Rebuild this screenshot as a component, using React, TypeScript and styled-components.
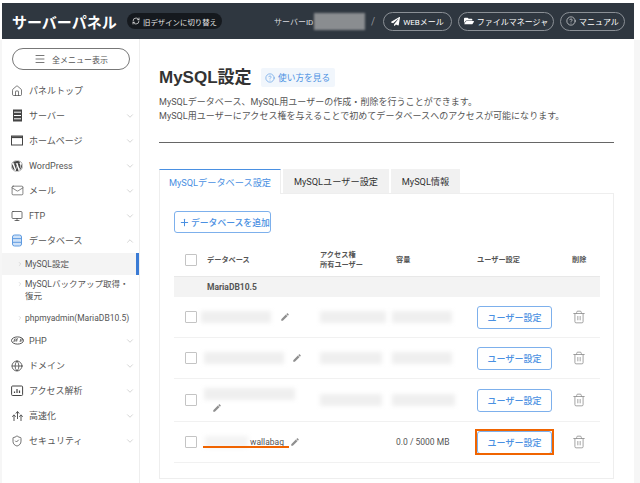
import React from 'react';
import styled, { createGlobalStyle } from 'styled-components';
import {
  ChevronDown, ChevronRight, ChevronUp, CircleHelp, Globe, House, Mail, Menu,
  Monitor, Plus, RefreshCw, ShieldCheck, Trash2,
} from 'lucide-react';
import { FaFolderOpen, FaPaperPlane, FaWordpress } from 'react-icons/fa';
import { MdEdit } from 'react-icons/md';

const GlobalStyle = createGlobalStyle`
  html, body { margin: 0; padding: 0; background: #fff; }
  body { font-family: Roboto, "Noto Sans CJK JP", sans-serif; color: #444; }
  * { box-sizing: border-box; }
`;

const Page = styled.div`
  width: 640px;
  height: 483px;
  overflow: hidden;
  padding-top: 3px;
  display: flex;
`;
const Frame = styled.div`
  width: 632px;
  height: 480px;
  display: flex;
  flex-direction: column;
  flex-shrink: 0;
`;
const Gutter = styled.div`
  width: ${p => p.$w}px;
  flex-shrink: 0;
  background: #f6f6f6;
  margin-top: 37px;
`;
const Header = styled.header`
  height: 36px;
  background: #2f3740;
  display: flex;
  align-items: center;
  padding: 0 0 0 10px;
  color: #fff;
  flex-shrink: 0;
`;
const Logo = styled.div`
  font-size: 15px;
  font-weight: 700;
  white-space: nowrap;
  width: 115px;
`;
const OldDesign = styled.div`
  height: 16px;
  width: 95px;
  border-radius: 8px;
  background: #15191e;
  display: flex;
  align-items: center;
  justify-content: center;
  gap: 3px;
  font-size: 7.4px;
  color: #e8e8e8;
  white-space: nowrap;
`;
const ServerLabel = styled.div`
  margin-left: 52px;
  width: 40px;
  font-size: 8px;
  color: #d8dade;
  white-space: nowrap;
`;
const ServerBlur = styled.div`
  width: 51px;
  height: 17px;
  background: #8a8d90;
  filter: blur(1px);
`;
const Slash = styled.div`
  width: 18px;
  padding-left: 6px;
  font-size: 10px;
  color: #8f949a;
`;
const HeadButtons = styled.div`
  display: flex;
  gap: 6px;
`;
const HeadButton = styled.div`
  width: ${p => p.$w}px;
  height: 19px;
  border: 1px solid #8b9096;
  border-radius: 10px;
  display: flex;
  align-items: center;
  justify-content: center;
  gap: 3px;
  font-size: 8px;
  color: #fff;
  white-space: nowrap;
`;

const Body = styled.div`
  flex: 1;
  display: flex;
  min-height: 0;
`;
const Sidebar = styled.aside`
  width: 138px;
  flex-shrink: 0;
  border-right: 1px solid #eeeeee;
  padding-top: 9px;
`;
const MenuAll = styled.div`
  width: 118px;
  height: 22px;
  margin-left: 10px;
  border: 1px solid #777;
  border-radius: 11px;
  display: flex;
  align-items: center;
  justify-content: center;
  gap: 6px;
  font-size: 8px;
  color: #555;
`;
const NavList = styled.nav`
  margin-top: 8px;
`;
const NavRow = styled.div`
  height: 25px;
  display: flex;
  align-items: center;
  padding: 0 4px 0 9px;
  font-size: 9px;
  color: #555;
`;
const NavIcon = styled.span`
  width: 18px;
  flex-shrink: 0;
  display: flex;
  align-items: center;
  color: #444;
`;
const NavLabel = styled.span`
  flex: 1;
`;
const SubRow = styled.div`
  display: flex;
  align-items: flex-start;
  padding: ${p => p.$pad} 6px 0 15px;
  height: ${p => p.$h}px;
  font-size: 8.5px;
  line-height: 12px;
  color: #555;
  background: ${p => (p.$current ? '#f4f4f4' : 'transparent')};
  border-right: ${p => (p.$current ? '3px solid #3a7bd5' : '0')};
`;
const SubArrow = styled.span`
  width: 8px;
  flex-shrink: 0;
  padding-top: 3px;
  color: #aaa;
  display: flex;
`;

const Main = styled.main`
  flex: 1;
  padding: 25px 0 0 19px;
  min-width: 0;
`;
const TitleRow = styled.div`
  display: flex;
  align-items: center;
  gap: 9px;
  height: 22px;
`;
const Title = styled.h1`
  margin: 0;
  font-family: "Liberation Sans", "Noto Sans CJK JP", sans-serif;
  font-size: 17px;
  font-weight: 700;
  color: #333;
`;
const HelpLink = styled.div`
  height: 19px;
  width: 74px;
  margin-top: 5px;
  background: #f1f6fc;
  border-radius: 2px;
  display: flex;
  align-items: center;
  justify-content: center;
  gap: 3px;
  font-size: 8.7px;
  color: #4a90e2;
`;
const Lead = styled.p`
  margin: 9px 0 0;
  font-size: 9px;
  letter-spacing: 0.04px;
  line-height: 14px;
  color: #555;
  white-space: nowrap;
`;
const Rule = styled.hr`
  margin: 19px 0 0;
  width: 455px;
  border: 0;
  border-top: 1px solid #666;
  height: 0;
`;
const Tabs = styled.div`
  display: flex;
  gap: 2px;
  margin-top: 26px;
`;
const Tab = styled.div`
  width: ${p => p.$w}px;
  height: ${p => (p.$active ? '25px' : '24px')};
  margin-bottom: ${p => (p.$active ? '-1px' : '0')};
  display: flex;
  align-items: center;
  justify-content: center;
  font-size: 9.2px;
  position: relative;
  z-index: ${p => (p.$active ? 1 : 0)};
  color: ${p => (p.$active ? '#4a90e2' : '#333')};
  background: ${p => (p.$active ? '#fff' : '#f1f1f1')};
  border-top: ${p => (p.$active ? '1px solid #4a90e2' : '0')};
  border-left: ${p => (p.$active ? '1px solid #eee' : '0')};
  border-right: ${p => (p.$active ? '1px solid #eee' : '0')};
  white-space: nowrap;
`;
const Card = styled.section`
  position: relative;
  width: 455px;
  height: 286px;
  border: 1px solid #eeeeee;
  padding: 17px 13px 0 14px;
`;
const AddButton = styled.div`
  width: 97px;
  height: 22px;
  border: 1px solid #7db0ec;
  border-radius: 3px;
  display: flex;
  align-items: center;
  padding-left: 4px;
  gap: 1px;
  font-size: 8.8px;
  font-weight: 500;
  color: #4a90e2;
`;
const Table = styled.div`
  margin-top: 11px;
`;
const GridRow = styled.div`
  display: grid;
  grid-template-columns: 33px 113px 76px 81px 95px 1fr;
  align-items: center;
`;
const HeadRow = styled(GridRow)`
  height: 33px;
  font-size: 7.2px;
  line-height: 10px;
  font-weight: 700;
  color: #555;
  border-bottom: 1px solid #e8e8e8;
`;
const GroupRow = styled.div`
  height: 20px;
  padding-left: 33px;
  background: #f3f3f3;
  display: flex;
  align-items: center;
  font-size: 8.5px;
  font-weight: 700;
  color: #555;
`;
const DataRow = styled(GridRow)`
  height: ${p => p.$h}px;
  border-bottom: 1px solid #f1f1f1;
`;
const Check = styled.span`
  width: 12px;
  height: 12px;
  margin-left: 11px;
  border: 1px solid #c4c4c4;
  border-radius: 1px;
  display: block;
`;
const NameCell = styled.div`
  display: flex;
  flex-direction: ${p => (p.$stack ? 'column' : 'row')};
  align-items: ${p => (p.$stack ? 'flex-start' : 'center')};
  margin-left: ${p => p.$shift}px;
  gap: ${p => (p.$stack ? '3px' : '5px')};
  font-size: 8.5px;
  color: #555;
`;
const Blurred = styled.div`
  width: ${p => p.$w}px;
  height: 12px;
  flex-shrink: 0;
  background: #efefef;
  filter: blur(2px);
`;
const NameBlur = styled(Blurred)`
  background: ${p => (p.$faint ? '#f3f3f3' : '#efefef')};
`;
const SizeBlur = styled(Blurred)`
  margin-left: -4px;
`;
const Pencil = styled(MdEdit)`
  color: #8f8f8f;
  font-size: 10px;
  margin-left: ${p => p.$ml || 0}px;
  flex-shrink: 0;
`;
const Wallabag = styled.span`
  margin-left: -3px;
`;
const Usage = styled.div`
  font-size: 8.5px;
  color: #555;
  white-space: nowrap;
`;
const UserButton = styled.div`
  width: 75px;
  height: 23px;
  border: 1px solid #7db0ec;
  border-radius: 3px;
  display: flex;
  align-items: center;
  justify-content: center;
  font-size: 9px;
  font-weight: 500;
  color: #4a90e2;
`;
const Bin = styled(Trash2)`
  color: #8f8f8f;
`;
const OrangeBox = styled.div`
  position: absolute;
  left: 315px;
  top: 235px;
  width: 79px;
  height: 26px;
  border: 2.5px solid #f06400;
`;
const OrangeLine = styled.div`
  position: absolute;
  left: 43px;
  top: 252px;
  width: 86px;
  height: 2px;
  background: #f06400;
`;

const ServerIcon = () => (
  <svg width="13" height="13" viewBox="0 0 13 13">
    <rect x="2" y="0.5" width="9" height="12" fill="#444" />
    <path d="M3 3.2h7M3 6.5h7M3 9.8h7" stroke="#fff" strokeWidth="1" />
  </svg>
);
const HomePageIcon = () => (
  <svg width="13" height="13" viewBox="0 0 13 13" fill="none" stroke="#444">
    <rect x="0.5" y="2" width="11" height="9" strokeWidth="1" />
    <path d="M0.5 3.2h11" strokeWidth="1.8" />
  </svg>
);
const DatabaseIcon = () => (
  <svg width="13" height="13" viewBox="0 0 13 13" fill="#cfe2f8" stroke="#5f9be0" strokeWidth="1">
    <rect x="1.5" y="1" width="9" height="11" rx="2" />
    <path d="M1.5 4.6h9M1.5 8.3h9" />
  </svg>
);
const PhpIcon = () => (
  <svg width="13" height="13" viewBox="0 0 13 13" fill="none" stroke="#444" strokeWidth="0.9">
    <ellipse cx="6.5" cy="6.5" rx="6" ry="3.6" />
    <path d="M2.8 8 3.6 5h1.2q1 0 .7 1.1-.2.8-1.2.8H3.2M6.4 4l-.8 3.6M9 8l.7-3h1.1q1 0 .7 1.1-.2.8-1.2.8h-1" strokeWidth="0.7" />
  </svg>
);
const AccessIcon = () => (
  <svg width="13" height="13" viewBox="0 0 13 13" fill="none" stroke="#444">
    <rect x="0.6" y="2" width="11" height="9.5" rx="1" strokeWidth="1" />
    <path d="M3.5 9V7.5M6 9V5M8.5 9V6.5" strokeWidth="1.2" />
  </svg>
);
const SpeedIcon = () => (
  <svg width="13" height="13" viewBox="0 0 13 13" fill="none" stroke="#444" strokeWidth="0.9">
    <path d="M3 12V6.5M1.3 7.8 3 5.8l1.7 2M6.5 10V3M4.8 4.6 6.5 2.4l1.7 2.2M10 12V6.5M8.3 7.8 10 5.8l1.7 2" />
  </svg>
);

const navTop = [
  { label: 'パネルトップ', icon: <House size={12} strokeWidth={1.4} />, plain: true },
  { label: 'サーバー', icon: <ServerIcon /> },
  { label: 'ホームページ', icon: <HomePageIcon /> },
  { label: 'WordPress', icon: <FaWordpress size={12} /> },
  { label: 'メール', icon: <Mail size={13} strokeWidth={1.2} /> },
  { label: 'FTP', icon: <Monitor size={12} strokeWidth={1.5} /> },
];
const navBottom = [
  { label: 'PHP', icon: <PhpIcon /> },
  { label: 'ドメイン', icon: <Globe size={12} strokeWidth={1.6} /> },
  { label: 'アクセス解析', icon: <AccessIcon /> },
  { label: '高速化', icon: <SpeedIcon /> },
  { label: 'セキュリティ', icon: <ShieldCheck size={12} strokeWidth={1.5} /> },
];

const NavItem = ({ label, icon, plain }: { label: string; icon: React.ReactNode; plain?: boolean }) => (
  <NavRow>
    <NavIcon>{icon}</NavIcon>
    <NavLabel>{label}</NavLabel>
    {!plain && <ChevronDown size={10} strokeWidth={1} color="#999" />}
  </NavRow>
);

const Sub = ({ children, current, h, pad }: { children: React.ReactNode; current?: boolean; h: number; pad: string }) => (
  <SubRow $current={current} $h={h} $pad={pad}>
    <SubArrow><ChevronRight size={6} strokeWidth={1.5} /></SubArrow>
    <span>{children}</span>
  </SubRow>
);

const rows = [
  { h: 41, name: <NameCell $shift={-6}><NameBlur $w={70} /><Pencil $ml={4} /></NameCell>, user: 66, size: 60 },
  { h: 41, name: <NameCell $shift={-3}><NameBlur $w={80} /><Pencil $ml={3} /></NameCell>, user: 62, size: 60 },
  { h: 43, name: <NameCell $shift={-3} $stack><NameBlur $w={91} /><Pencil $ml={8} /></NameCell>, user: 62, size: 63 },
];

export default function App() {
  return (
    <Page>
      <GlobalStyle />
      <Gutter $w={2} />
      <Frame>
        <Header>
          <Logo>サーバーパネル</Logo>
          <OldDesign><RefreshCw size={8} strokeWidth={2.2} />旧デザインに切り替え</OldDesign>
          <ServerLabel>サーバーID</ServerLabel>
          <ServerBlur />
          <Slash>/</Slash>
          <HeadButtons>
            <HeadButton $w={69}><FaPaperPlane size={9} />WEBメール</HeadButton>
            <HeadButton $w={96}><FaFolderOpen size={10} />ファイルマネージャ</HeadButton>
            <HeadButton $w={65}><CircleHelp size={10} strokeWidth={1.4} />マニュアル</HeadButton>
          </HeadButtons>
        </Header>
        <Body>
          <Sidebar>
            <MenuAll><Menu size={12} strokeWidth={1.6} />全メニュー表示</MenuAll>
            <NavList>
              {navTop.map(n => <NavItem key={n.label} {...n} />)}
              <NavRow>
                <NavIcon><DatabaseIcon /></NavIcon>
                <NavLabel>データベース</NavLabel>
                <ChevronUp size={10} strokeWidth={1} color="#999" />
              </NavRow>
              <Sub current h={22} pad="5px">MySQL設定</Sub>
              <Sub h={30} pad="3px">MySQLバックアップ取得・復元</Sub>
              <Sub h={23} pad="7px">phpmyadmin(MariaDB10.5)</Sub>
              {navBottom.map(n => <NavItem key={n.label} {...n} />)}
            </NavList>
          </Sidebar>
          <Main>
            <TitleRow>
              <Title>MySQL設定</Title>
              <HelpLink><CircleHelp size={10} strokeWidth={1.4} />使い方を見る</HelpLink>
            </TitleRow>
            <Lead>
              MySQLデータベース、MySQL用ユーザーの作成・削除を行うことができます。<br />
              MySQL用ユーザーにアクセス権を与えることで初めてデータベースへのアクセスが可能になります。
            </Lead>
            <Rule />
            <Tabs>
              <Tab $active $w={122}>MySQLデータベース設定</Tab>
              <Tab $w={106}>MySQLユーザー設定</Tab>
              <Tab $w={69}>MySQL情報</Tab>
            </Tabs>
            <Card>
              <AddButton><Plus size={11} strokeWidth={2.2} />データベースを追加</AddButton>
              <Table>
                <HeadRow>
                  <Check />
                  <span>データベース</span>
                  <span>アクセス権<br />所有ユーザー</span>
                  <span>容量</span>
                  <span>ユーザー設定</span>
                  <span>削除</span>
                </HeadRow>
                <GroupRow>MariaDB10.5</GroupRow>
                {rows.map((r, i) => (
                  <DataRow key={i} $h={r.h}>
                    <Check />
                    {r.name}
                    <Blurred $w={r.user} />
                    <SizeBlur $w={r.size} />
                    <UserButton>ユーザー設定</UserButton>
                    <Bin size={14} strokeWidth={1.4} />
                  </DataRow>
                ))}
                <DataRow $h={41}>
                  <Check />
                  <NameCell $shift={-2}>
                    <NameBlur $w={43} $faint />
                    <Wallabag>wallabag</Wallabag>
                    <Pencil $ml={1} />
                  </NameCell>
                  <span />
                  <Usage>0.0 / 5000 MB</Usage>
                  <UserButton>ユーザー設定</UserButton>
                  <Bin size={14} strokeWidth={1.4} />
                </DataRow>
              </Table>
              <OrangeLine />
              <OrangeBox />
            </Card>
          </Main>
        </Body>
      </Frame>
      <Gutter $w={6} />
    </Page>
  );
}
